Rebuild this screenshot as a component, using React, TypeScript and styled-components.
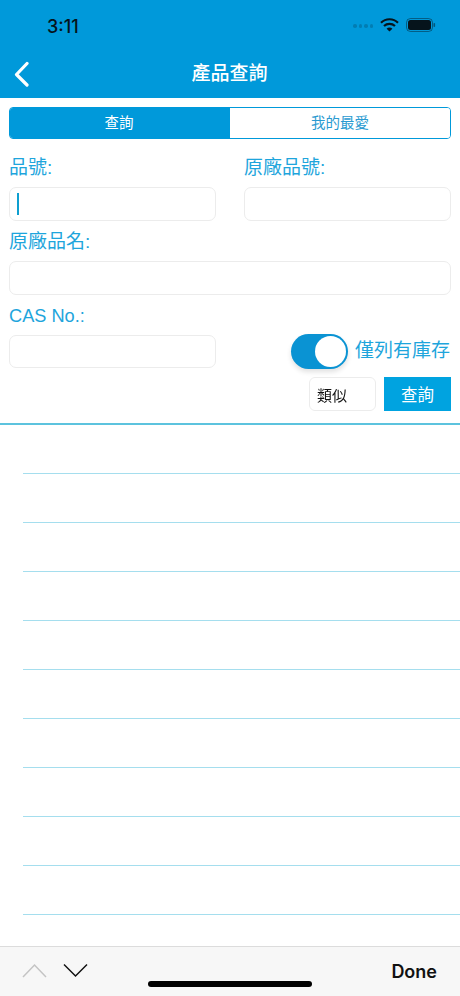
import React from "react";
import styled, { createGlobalStyle } from "styled-components";

const BLUE = "#0099da";
const TEXT_BLUE = "#1ea5dc";
const CJK = `"Liberation Sans", "Noto Sans CJK TC", sans-serif`;
const UI = `"Inter", "Noto Sans CJK TC", sans-serif`;

const Global = createGlobalStyle`
  html, body { margin: 0; padding: 0; background: #fff; }
  * { box-sizing: border-box; }
  body { font-family: ${CJK}; }
`;

const Page = styled.div`
  position: relative;
  width: 460px;
  height: 996px;
  overflow: hidden;
  display: flex;
  flex-direction: column;
  background: #fff;
`;

const Header = styled.header`
  height: 98px;
  flex: none;
  background: ${BLUE};
  display: flex;
  flex-direction: column;
`;

const StatusBar = styled.div`
  height: 51px;
  flex: none;
  padding: 10px 24px 0 47px;
  display: flex;
  align-items: flex-start;
  justify-content: space-between;
`;

const Clock = styled.span`
  font-family: ${UI};
  font-size: 18px;
  line-height: 32px;
  font-weight: 500;
  color: #06141c;
  transform: translateY(1px);
`;

const StatusIcons = styled.div`
  display: flex;
  align-items: center;
  gap: 7px;
  height: 32px;
  margin-top: -1px;
`;

const NavBar = styled.div`
  flex: 1;
  display: flex;
  align-items: flex-start;
  padding: 10px 0 0 14px;
`;

const Title = styled.h1`
  flex: 1;
  margin: 0 0 0 -14px;
  padding-right: 14px;
  text-align: center;
  font-size: 19px;
  line-height: 26px;
  font-weight: 500;
  color: #fff;
  transform: translateX(-1px);
`;

const BackButton = styled.svg`
  flex: none;
  width: 15px;
  height: 26px;
`;

const Form = styled.section`
  padding: 9px 9px 0;
  flex: none;
`;

const Segment = styled.div`
  height: 32px;
  display: grid;
  grid-template-columns: 220px 1fr;
  border: 1px solid ${BLUE};
  border-radius: 4px;
  overflow: hidden;
`;

const SegmentItem = styled.div<{ $active?: boolean }>`
  display: flex;
  align-items: center;
  justify-content: center;
  padding: ${(p) => (p.$active ? "0 2px 3px 0" : "0 0 3px")};
  font-size: 14.5px;
  background: ${(p) => (p.$active ? BLUE : "#fff")};
  color: ${(p) => (p.$active ? "#fff" : "#2b9bd1")};
`;

const Fields = styled.div`
  display: grid;
  grid-template-columns: 207px 207px;
  justify-content: space-between;
  margin-top: 15px;
`;

const Field = styled.div<{ $wide?: boolean }>`
  grid-column: ${(p) => (p.$wide ? "1 / -1" : "auto")};
  display: flex;
  flex-direction: column;
`;

const Label = styled.label<{ $latin?: boolean }>`
  height: 33px;
  padding-top: 2px;
  font-size: ${(p) => (p.$latin ? "18.2px" : "19px")};
  line-height: 24px;
  color: ${TEXT_BLUE};
  font-weight: 400;
`;

const InputBox = styled.div<{ $short?: boolean }>`
  height: ${(p) => (p.$short ? "33px" : "34px")};
  border: 1px solid #ececec;
  border-radius: 7px;
  background: #fff;
  margin-bottom: 7px;
  padding: 5px 7px;
`;

const Caret = styled.div`
  width: 2px;
  height: 22px;
  background: #0e9fd0;
`;

const ToggleCell = styled.div`
  display: flex;
  justify-content: flex-end;
  align-items: center;
  gap: 7px;
  height: 34px;
  margin-top: 32px;
  padding-right: 1px;
`;

const Toggle = styled.div`
  width: 57px;
  height: 35px;
  border-radius: 18px;
  background: #0a93d3;
  position: relative;
  box-shadow: 0 3px 5px rgba(0, 0, 0, 0.12);
`;

const Knob = styled.div`
  position: absolute;
  right: 2px;
  top: 2px;
  width: 31px;
  height: 31px;
  border-radius: 50%;
  background: #fff;
`;

const ToggleLabel = styled.span`
  font-size: 19px;
  line-height: 24px;
  color: ${TEXT_BLUE};
`;

const ActionRow = styled.div`
  display: flex;
  justify-content: flex-end;
  gap: 8px;
  margin-top: 2px;
`;

const Select = styled.div`
  width: 67px;
  height: 34px;
  border: 1px solid #ececec;
  border-radius: 6px;
  display: flex;
  align-items: center;
  padding-left: 7px;
  font-size: 15px;
  color: #111;
  will-change: transform;
`;

const SearchButton = styled.button`
  width: 67px;
  height: 34px;
  border: 0;
  padding: 0;
  background: #00a3e0;
  color: #fff;
  font-family: ${CJK};
  font-size: 16.5px;
`;

const Results = styled.div`
  flex: 1;
  margin-top: 12px;
  border-top: 2px solid #5cc3de;
  min-height: 0;
`;

const ResultRow = styled.div`
  height: 49px;
  margin-left: 23px;
  border-bottom: 1px solid #a5deee;
`;

const Toolbar = styled.footer`
  height: 50px;
  flex: none;
  background: #f7f7f7;
  border-top: 1px solid #dcdcdc;
  display: flex;
  align-items: flex-start;
  padding: 16px 23px 0 22px;
  gap: 16px;
`;

const Chevron = styled.svg`
  width: 25px;
  height: 15px;
  flex: none;
`;

const DoneLabel = styled.span`
  font-family: ${UI};
  margin-left: auto;
  font-size: 18px;
  line-height: 18px;
  font-weight: 600;
  color: #111;
`;

const HomeIndicator = styled.div`
  position: absolute;
  left: 148px;
  bottom: 9px;
  width: 164px;
  height: 6px;
  border-radius: 3px;
  background: #000;
`;

const Cells = styled.div`
  display: flex;
  gap: 2px;
  opacity: 0.2;
  margin-top: 2px;
`;

const Cell = styled.i`
  width: 3.5px;
  height: 3.5px;
  border-radius: 50%;
  background: #06141c;
`;

export default function App() {
  return (
    <Page>
      <Global />
      <Header>
        <StatusBar>
          <Clock>3:11</Clock>
          <StatusIcons>
            <Cells>
              <Cell />
              <Cell />
              <Cell />
              <Cell />
            </Cells>
            <svg width="19" height="14" viewBox="0 0 19 14">
              <path d="M1 4.8a12 12 0 0 1 17 0" fill="none" stroke="#06141c" strokeWidth="2.2" />
              <path d="M4 8a8 8 0 0 1 11 0" fill="none" stroke="#06141c" strokeWidth="2.2" />
              <path d="M6.6 10.8a4 4 0 0 1 5.8 0L9.5 13.6z" fill="#06141c" />
            </svg>
            <svg width="30" height="14" viewBox="0 0 30 14">
              <rect x="0.5" y="0.5" width="26" height="13" rx="4" fill="none" stroke="#06141c" strokeOpacity="0.45" />
              <rect x="2" y="2" width="23" height="10" rx="2.5" fill="#06141c" />
              <rect x="27.5" y="5" width="1.6" height="4" rx="0.8" fill="#06141c" fillOpacity="0.5" />
            </svg>
          </StatusIcons>
        </StatusBar>
        <NavBar>
          <BackButton viewBox="0 0 15 26">
            <path d="M13 2.5 2.5 13.5 13 24" fill="none" stroke="#fff" strokeWidth="3.2" strokeLinecap="round" strokeLinejoin="round" />
          </BackButton>
          <Title>產品查詢</Title>
        </NavBar>
      </Header>
      <Form>
        <Segment>
          <SegmentItem $active>查詢</SegmentItem>
          <SegmentItem>我的最愛</SegmentItem>
        </Segment>
        <Fields>
          <Field>
            <Label>品號:</Label>
            <InputBox>
              <Caret />
            </InputBox>
          </Field>
          <Field>
            <Label>原廠品號:</Label>
            <InputBox />
          </Field>
          <Field $wide>
            <Label>原廠品名:</Label>
            <InputBox />
          </Field>
          <Field>
            <Label $latin>CAS No.:</Label>
            <InputBox $short />
          </Field>
          <ToggleCell>
            <Toggle>
              <Knob />
            </Toggle>
            <ToggleLabel>僅列有庫存</ToggleLabel>
          </ToggleCell>
        </Fields>
        <ActionRow>
          <Select>類似</Select>
          <SearchButton>查詢</SearchButton>
        </ActionRow>
      </Form>
      <Results>
        {Array.from({ length: 10 }, (_, i) => (
          <ResultRow key={i} />
        ))}
      </Results>
      <Toolbar>
        <Chevron viewBox="0 0 25 15">
          <path d="M1 14 12.5 2 24 14" fill="none" stroke="#c4c4c4" strokeWidth="1.5" />
        </Chevron>
        <Chevron viewBox="0 0 25 15">
          <path d="M1 1.5 12.5 13 24 1.5" fill="none" stroke="#111" strokeWidth="1.5" />
        </Chevron>
        <DoneLabel>Done</DoneLabel>
      </Toolbar>
      <HomeIndicator />
    </Page>
  );
}
